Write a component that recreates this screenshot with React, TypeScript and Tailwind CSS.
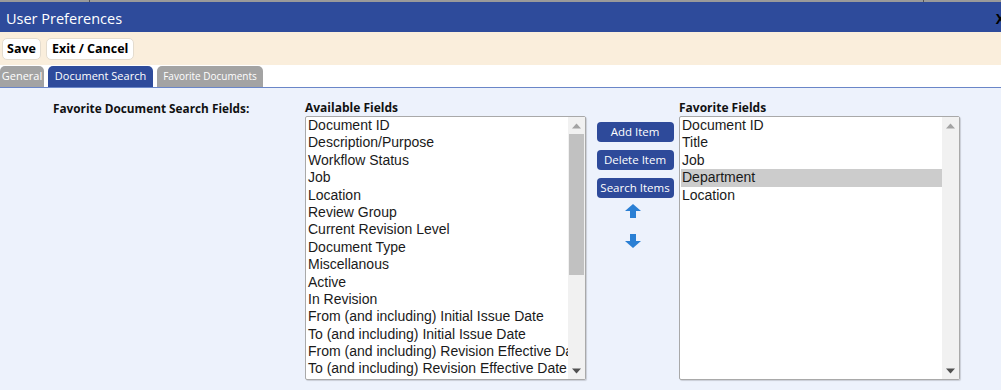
const available = [
  'Document ID',
  'Description/Purpose',
  'Workflow Status',
  'Job',
  'Location',
  'Review Group',
  'Current Revision Level',
  'Document Type',
  'Miscellanous',
  'Active',
  'In Revision',
  'From (and including) Initial Issue Date',
  'To (and including) Initial Issue Date',
  'From (and including) Revision Effective Date',
  'To (and including) Revision Effective Date',
];

const favorites = ['Document ID', 'Title', 'Job', 'Department', 'Location'];

function ScrollArrow({ up }: { up?: boolean }) {
  return (
    <svg width="9" height="6" viewBox="0 0 9 6" className="block">
      {up ? <path d="M0 5.5 L4.5 0.5 L9 5.5 Z" fill="#a3a3a3" /> : <path d="M0 0.5 L4.5 5.5 L9 0.5 Z" fill="#505050" />}
    </svg>
  );
}

function ListBox({ items, selected, thumb }: { items: string[]; selected?: string; thumb?: boolean }) {
  return (
    <div className="flex h-[264px] w-[281px] border border-[#a9a9a9] bg-white rounded-[2px] shadow-[1px_1px_1px_rgba(0,0,0,0.15)]">
      <div className="flex-1 overflow-hidden pl-[1px]">
        {items.map((it) => (
          <div
            key={it}
            className={`h-[17.4px] whitespace-nowrap pl-[1px] text-[14px] leading-[17.4px] text-[#1a1a1a] ${
              it === selected ? 'bg-[#cccccc]' : ''
            }`}
          >
            {it}
          </div>
        ))}
      </div>
      <div className="flex w-[17px] flex-col items-center bg-[#f1f1f1]">
        <div className="flex h-[17px] items-center justify-center">
          <ScrollArrow up />
        </div>
        <div className="w-full flex-1 px-[1px]">
          {thumb && <div className="h-[141px] w-full bg-[#c1c1c1]" />}
        </div>
        <div className="flex h-[17px] items-center justify-center">
          <ScrollArrow />
        </div>
      </div>
    </div>
  );
}

function ActionButton({ label }: { label: string }) {
  return (
    <button className="h-[20px] w-[77px] rounded-[4px] bg-[#2e4a9a] text-[11.5px] text-white leading-[20px]">
      {label}
    </button>
  );
}

function Arrow({ up }: { up?: boolean }) {
  return (
    <svg width="16" height="14" viewBox="0 0 16 14">
      {up ? (
        <path d="M8 0 L16 7 L11 7 L11 14 L5 14 L5 7 L0 7 Z" fill="#2a7fd4" />
      ) : (
        <path d="M8 14 L16 7 L11 7 L11 0 L5 0 L5 7 L0 7 Z" fill="#2a7fd4" />
      )}
    </svg>
  );
}

export default function App() {
  return (
    <div className="h-[390px] w-[1001px] overflow-hidden bg-[#edf2fc] font-['Open_Sans','Noto_Sans',sans-serif]">
      <div className="flex h-[2px] bg-[#9a9a9a]">
        <div className="ml-[89px] w-[1px] bg-[#555]" />
        <div className="ml-[833px] w-[1px] bg-[#555]" />
      </div>
      <div className="flex h-[30px] items-center justify-between bg-[#2e4b9b] pt-[3px] pl-[6px] pr-0">
        <span className="text-[14.5px] text-white">User Preferences</span>
        <span className="mr-[-4px] text-[14px] font-bold text-black">X</span>
      </div>
      <div className="flex h-[33px] items-center gap-[5px] bg-[#faeedc] pl-[2px] pt-[1px]">
        <button className="h-[22px] rounded-[5px] border border-[#e4dccf] bg-white px-[4px] text-[12.5px] font-bold text-black">
          Save
        </button>
        <button className="h-[22px] rounded-[5px] border border-[#e4dccf] bg-white px-[5px] text-[12.5px] font-bold text-black">
          Exit / Cancel
        </button>
      </div>
      <div className="flex h-[23px] items-end gap-[4px] border-b-[1.5px] border-[#6a86c8] bg-white">
        <div className="flex h-[21px] w-[44px] items-center justify-center rounded-t-[5px] bg-[#a3a3a3] text-[11px] text-white">
          General
        </div>
        <div className="flex h-[21px] w-[105px] items-center justify-center rounded-t-[5px] bg-[#2e4b9b] text-[11px] text-white">
          Document Search
        </div>
        <div className="flex h-[21px] w-[106px] items-center justify-center rounded-t-[5px] bg-[#a3a3a3] text-[10px] text-white">
          Favorite Documents
        </div>
      </div>
      <div className="flex pt-[12px]">
        <div className="w-[305px] pl-[53px] text-[11.8px] font-bold leading-[16px] text-[#111]">
          Favorite Document Search Fields:
        </div>
        <div className="flex flex-col">
          <div className="text-[12px] font-bold leading-[16px] text-[#111]">Available Fields</div>
          <div className="font-['Liberation_Sans',Arial,sans-serif]">
            <ListBox items={available} thumb />
          </div>
        </div>
        <div className="flex w-[93px] flex-col items-center gap-[8px] pl-[5px] pt-[22px]">
          <ActionButton label="Add Item" />
          <ActionButton label="Delete Item" />
          <ActionButton label="Search Items" />
          <div className="-mt-[2px] mr-[5px]">
            <Arrow up />
          </div>
          <div className="mt-[8px] mr-[5px]">
            <Arrow />
          </div>
        </div>
        <div className="flex flex-col">
          <div className="text-[12px] font-bold leading-[16px] text-[#111]">Favorite Fields</div>
          <div className="font-['Liberation_Sans',Arial,sans-serif]">
            <ListBox items={favorites} selected="Department" />
          </div>
        </div>
      </div>
    </div>
  );
}
